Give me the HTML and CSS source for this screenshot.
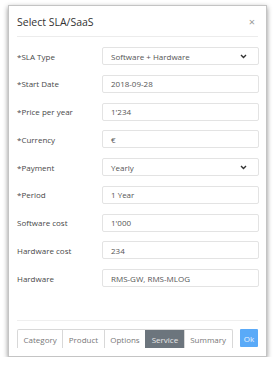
FILE: index.html
```html
<!DOCTYPE html>
<html lang="en">
<head>
    <meta charset="UTF-8">
    <title>Select SLA/SaaS</title>
    <link rel="stylesheet" href="styles.css">
</head>
<body>
    <div class="modal">
        <div class="modal-header">
            <h5>Select SLA/SaaS</h5>
            <span class="close">&times;</span>
        </div>

        <div class="modal-body">
            <div class="form-row">
                <label>*SLA Type</label>
                <div class="field select">Software + Hardware <span class="chev"><svg width="7" height="5" viewBox="0 0 7 5"><path d="M1 1l2.5 2.5L6 1" fill="none" stroke="#333" stroke-width="1.4"/></svg></span></div>
            </div>
            <div class="form-row">
                <label>*Start Date</label>
                <div class="field">2018-09-28</div>
            </div>
            <div class="form-row">
                <label>*Price per year</label>
                <div class="field">1'234</div>
            </div>
            <div class="form-row">
                <label>*Currency</label>
                <div class="field">€</div>
            </div>
            <div class="form-row">
                <label>*Payment</label>
                <div class="field select">Yearly <span class="chev"><svg width="7" height="5" viewBox="0 0 7 5"><path d="M1 1l2.5 2.5L6 1" fill="none" stroke="#333" stroke-width="1.4"/></svg></span></div>
            </div>
            <div class="form-row">
                <label>*Period</label>
                <div class="field">1 Year</div>
            </div>
            <div class="form-row">
                <label>Software cost</label>
                <div class="field">1'000</div>
            </div>
            <div class="form-row">
                <label>Hardware cost</label>
                <div class="field">234</div>
            </div>
            <div class="form-row">
                <label>Hardware</label>
                <div class="field">RMS-GW, RMS-MLOG</div>
            </div>
        </div>

        <div class="modal-footer">
            <div class="tabs">
                <span class="tab">Category</span>
                <span class="tab">Product</span>
                <span class="tab">Options</span>
                <span class="tab active">Service</span>
                <span class="tab">Summary</span>
            </div>
            <span class="btn-ok">Ok</span>
        </div>
    </div>
</body>
</html>
```

FILE: styles.css
```css
* {
    box-sizing: border-box;
    margin: 0;
    padding: 0;
}

body {
    font-family: 'Open Sans', 'Noto Sans', sans-serif;
    background: #fff;
    color: #333;
    padding: 5px 0 0 8px;
}

.modal {
    width: 259px;
    height: 352px;
    background: #fff;
    border: 1px solid #c4c4c4;
    box-shadow: 0 2px 5px rgba(0, 0, 0, 0.45);
    display: flex;
    flex-direction: column;
}

.modal-header {
    height: 31px;
    margin: 0 8px;
    border-bottom: 1px solid #ececec;
    display: flex;
    align-items: center;
    justify-content: space-between;
}

.modal-header h5 {
    font-size: 10.5px;
    font-weight: 400;
    color: #333;
    padding-top: 2px;
}

.close {
    font-size: 11px;
    color: #999;
    padding-right: 3px;
}

.modal-body {
    padding: 10px 0 0 8px;
    flex: 1;
}

.form-row {
    display: flex;
    align-items: center;
    height: 18px;
    margin-bottom: 9.75px;
}

.form-row label {
    width: 85px;
    font-size: 8px;
    color: #484848;
}

.field {
    width: 157px;
    height: 18px;
    border: 1px solid #e3e3e3;
    border-radius: 2px;
    font-size: 8px;
    color: #555;
    padding: 0 8px;
    display: flex;
    align-items: center;
}

.select {
    justify-content: space-between;
}

.chev {
    display: flex;
    padding-right: 3px;
}

.modal-footer {
    margin: 0 8px;
    border-top: 1px solid #efefef;
    padding: 8px 0 8px;
    display: flex;
    justify-content: space-between;
}

.tabs {
    display: flex;
    border: 1px solid #d8d8d8;
    border-bottom: none;
    border-radius: 2px 2px 0 0;
}

.tab {
    font-size: 8px;
    color: #777;
    height: 18px;
    padding: 0 5.5px;
    display: flex;
    align-items: center;
    border-left: 1px solid #d8d8d8;
}

.tab:first-child {
    border-left: none;
}

.tab.active {
    background: #6c757d;
    color: #e8e8e8;
    border-left-color: #6c757d;
}

.btn-ok {
    background: #5aaaf8;
    color: #e8f3ff;
    font-size: 8px;
    height: 18px;
    width: 18px;
    display: flex;
    align-items: center;
    justify-content: center;
    border-radius: 1px;
}
```
